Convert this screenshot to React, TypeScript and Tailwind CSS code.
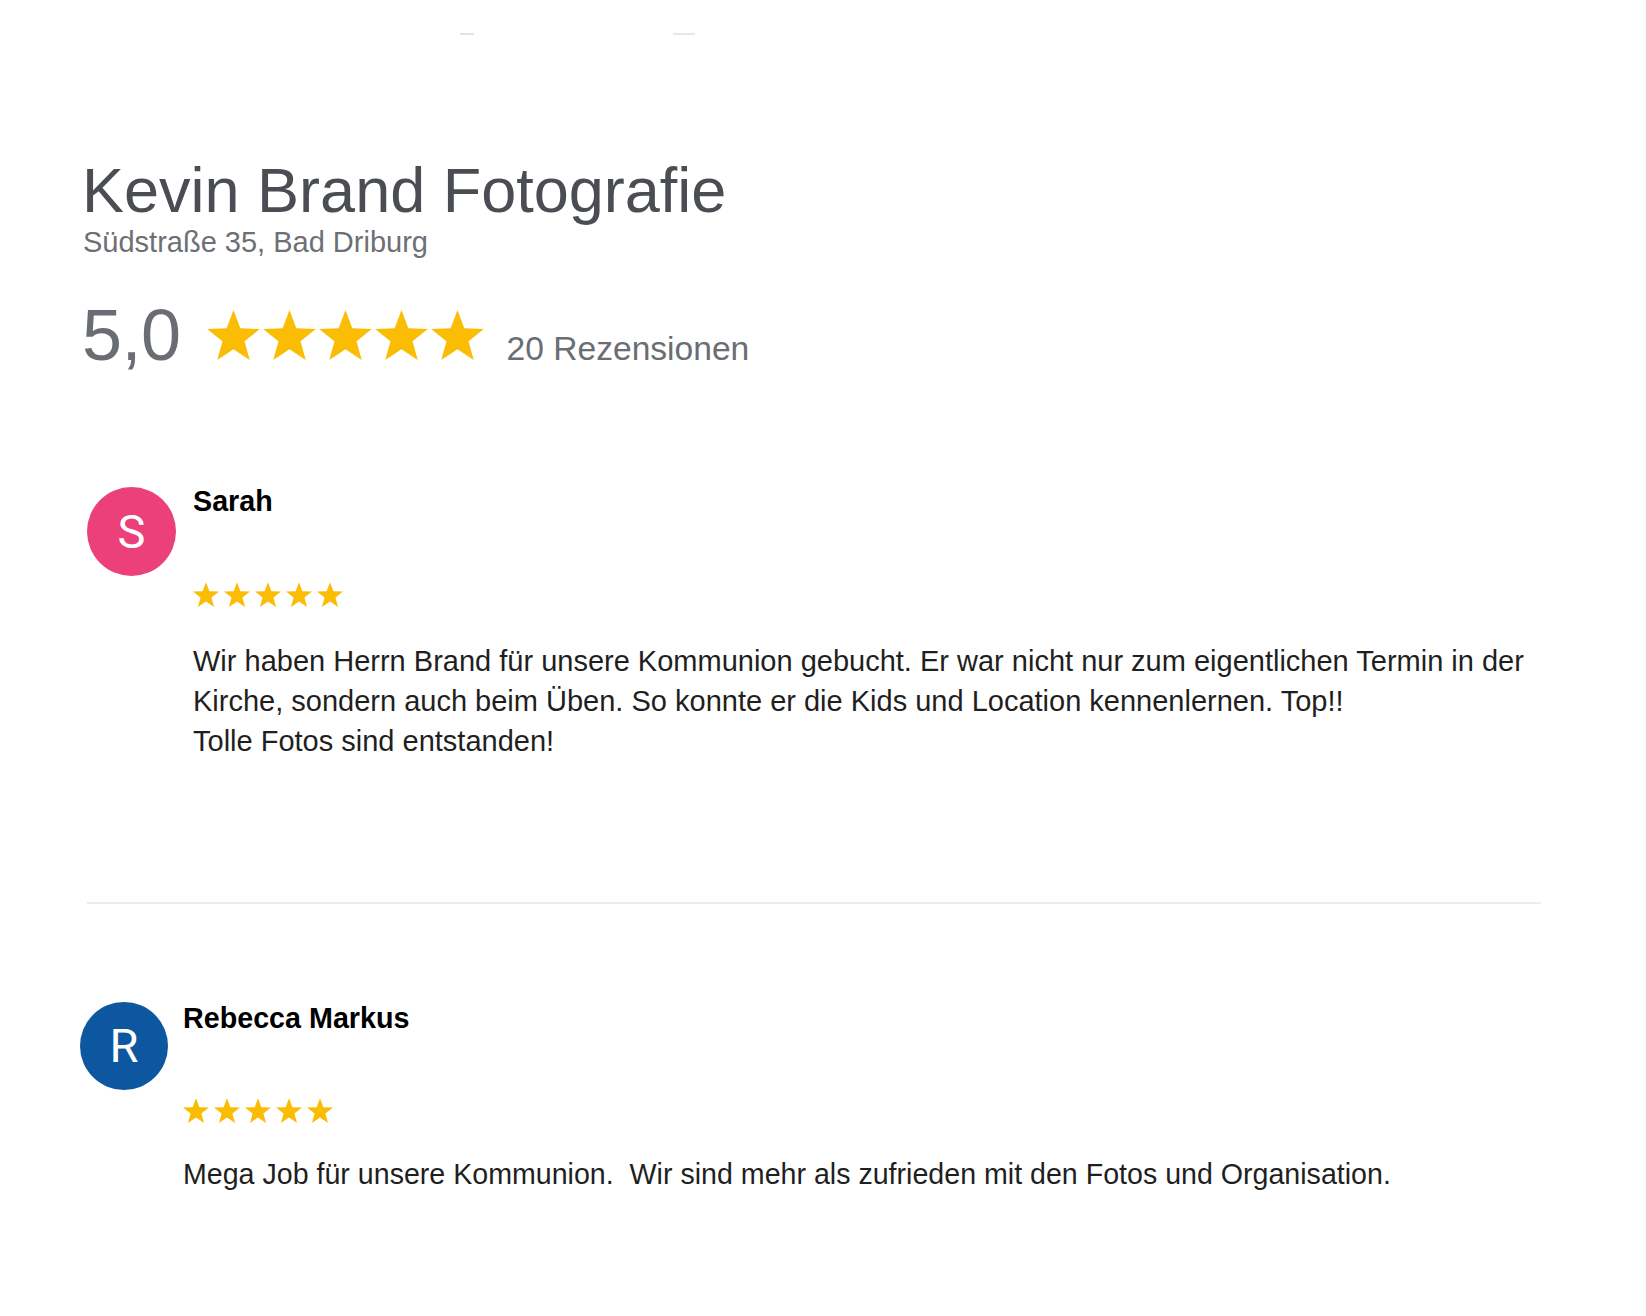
import React from 'react';

function Star({ className }: { className: string }) {
  return (
    <svg viewBox="0 0 100 95" className={className} aria-hidden="true">
      <polygon
        fill="#FBBC04"
        points="50,0 62.9,34.8 100,36.3 70.9,59.4 80.9,95.1 50,74.6 19.1,95.1 29.1,59.4 0,36.3 37.1,34.8"
      />
    </svg>
  );
}

function StarRow({ size }: { size: 'lg' | 'sm' }) {
  const cls = size === 'lg' ? 'h-[50px] w-[53px] shrink-0' : 'h-[25px] w-[26px] shrink-0';
  return (
    <div className={size === 'lg' ? 'flex gap-[3px]' : 'flex gap-[5px]'}>
      {[0, 1, 2, 3, 4].map((i) => (
        <Star key={i} className={cls} />
      ))}
    </div>
  );
}

export default function App() {
  return (
    <div className="min-h-screen w-full bg-white font-['Liberation_Sans',Arial,sans-serif]">
      {/* faint marks at the top edge */}
      <div className="flex pt-[33px]">
        <div className="ml-[460px] h-[2px] w-[14px] bg-gray-300/70" />
        <div className="ml-[199px] h-[2px] w-[22px] bg-gray-200" />
      </div>

      {/* Business header */}
      <div className="pl-[82px]">
        <h1 className="mt-[124px] text-[63px] leading-none font-normal text-[#4a4d52]">
          Kevin Brand Fotografie
        </h1>
        <p className="mt-[6px] ml-[1px] text-[29px] leading-none text-[#6c7075]">Südstraße 35, Bad Driburg</p>

        <div className="mt-[42px] flex items-baseline">
          <span className="text-[72px] leading-none tracking-[-0.5px] text-[#6a6e73]">5,0</span>
          <div className="ml-[26px]">
            <StarRow size="lg" />
          </div>
          <span className="ml-[23px] text-[33.6px] leading-none text-[#6a6e73]">20 Rezensionen</span>
        </div>
      </div>

      {/* Review: Sarah */}
      <div className="mt-[116px] ml-[87px] flex">
        <div className="flex h-[89px] w-[89px] shrink-0 items-center justify-center rounded-full bg-[#ec407a] font-['Roboto',Arial,sans-serif] text-[47px] leading-none text-white">
          S
        </div>
        <div className="ml-[17px]">
          <div className="text-[28.7px] leading-none font-bold text-black">Sarah</div>
          <div className="mt-[66px]">
            <StarRow size="sm" />
          </div>
          <p className="mt-[34px] text-[29px] leading-[40px] text-[#1f1f1f]">
            Wir haben Herrn Brand für unsere Kommunion gebucht. Er war nicht nur zum eigentlichen Termin in der
            <br />
            Kirche, sondern auch beim Üben. So konnte er die Kids und Location kennenlernen. Top!!
            <br />
            Tolle Fotos sind entstanden!
          </p>
        </div>
      </div>

      <div className="mt-[141px] ml-[87px] h-[2px] w-[1454px] bg-[#ececec]" />

      {/* Review: Rebecca Markus */}
      <div className="mt-[98px] ml-[80px] flex">
        <div className="flex h-[88px] w-[88px] shrink-0 items-center justify-center rounded-full bg-[#0d57a0] font-['Roboto',Arial,sans-serif] text-[47px] leading-none text-white">
          R
        </div>
        <div className="ml-[15px] pt-[2px]">
          <div className="text-[28.7px] leading-none font-bold text-black">Rebecca Markus</div>
          <div className="mt-[66px]">
            <StarRow size="sm" />
          </div>
          <p className="mt-[31px] whitespace-pre text-[28.6px] leading-[40px] text-[#1f1f1f]">
            {'Mega Job für unsere Kommunion.  Wir sind mehr als zufrieden mit den Fotos und Organisation.'}
          </p>
        </div>
      </div>
    </div>
  );
}
